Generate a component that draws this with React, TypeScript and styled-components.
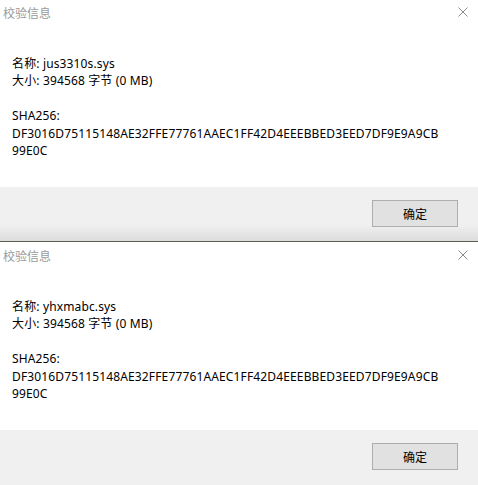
import React from "react";
import styled, { createGlobalStyle } from "styled-components";

const Global = createGlobalStyle`
  html, body { margin: 0; padding: 0; background: #ffffff; }
  body { overflow: hidden; }
`;

const Page = styled.div`
  width: 478px;
  height: 485px;
  display: flex;
  flex-direction: column;
  overflow: hidden;
  font-family: "Noto Sans", "Noto Sans CJK SC", sans-serif;
`;

const Dialog = styled.section<{ $first?: boolean }>`
  display: flex;
  flex-direction: column;
  flex: ${(p) => (p.$first ? "0 0 242px" : "1 1 auto")};
  background: #ffffff;
  border-bottom: ${(p) => (p.$first ? "1px solid #5f5b55" : "none")};
  box-sizing: border-box;
`;

const TitleBar = styled.header<{ $first?: boolean }>`
  display: flex;
  align-items: center;
  justify-content: space-between;
  height: ${(p) => (p.$first ? 24 : 25)}px;
  padding: ${(p) => (p.$first ? "0" : "1px")} 10px 0 3px;
  box-sizing: border-box;
`;

const Title = styled.span`
  font-family: "Noto Sans CJK SC", sans-serif;
  font-size: 12px;
  color: #9a9a9a;
`;

const Close = styled.button`
  border: none;
  background: none;
  padding: 0;
  width: 10px;
  height: 10px;
  display: flex;
`;

const Content = styled.div`
  height: 163px;
  padding: 31px 12px 0 12px;
  box-sizing: border-box;
  font-size: 12px;
  line-height: 17.4px;
  letter-spacing: 0.14px;
  color: #000;
`;

const Line = styled.div``;
const Gap = styled.div`
  height: 17.4px;
`;

const Footer = styled.footer<{ $first?: boolean }>`
  flex: 1 1 auto;
  display: flex;
  justify-content: flex-end;
  align-items: flex-start;
  padding: 13px 20px 0 0;
  background: ${(p) =>
    p.$first
      ? "linear-gradient(to bottom, #f0f0f0 0px, #f0f0f0 38px, #dcdcdc 54px)"
      : "#f0f0f0"};
`;

const OkButton = styled.button`
  width: 86px;
  height: 27px;
  box-sizing: border-box;
  border: 1px solid #adadad;
  background: #e1e1e1;
  font-family: "Noto Sans CJK SC", sans-serif;
  font-size: 12px;
  color: #000;
  padding: 0;
`;

const HASH = "DF3016D75115148AE32FFE77761AAEC1FF42D4EEEBBED3EED7DF9E9A9CB99E0C";

function CloseIcon() {
  return (
    <svg width="10" height="10" viewBox="0 0 10 10">
      <path d="M0.5 0.5 L9.5 9.5 M9.5 0.5 L0.5 9.5" stroke="#8a8a8a" strokeWidth="1" fill="none" />
    </svg>
  );
}

function InfoDialog({ name, first }: { name: string; first?: boolean }) {
  return (
    <Dialog $first={first}>
      <TitleBar $first={first}>
        <Title>校验信息</Title>
        <Close aria-label="close">
          <CloseIcon />
        </Close>
      </TitleBar>
      <Content>
        <Line>名称: {name}</Line>
        <Line>大小: 394568 字节 (0 MB)</Line>
        <Gap />
        <Line>SHA256:</Line>
        <Line>{HASH.slice(0, 59)}</Line>
        <Line>{HASH.slice(59)}</Line>
      </Content>
      <Footer $first={first}>
        <OkButton>确定</OkButton>
      </Footer>
    </Dialog>
  );
}

export default function App() {
  return (
    <>
      <Global />
      <Page>
        <InfoDialog name="jus3310s.sys" first />
        <InfoDialog name="yhxmabc.sys" />
      </Page>
    </>
  );
}
